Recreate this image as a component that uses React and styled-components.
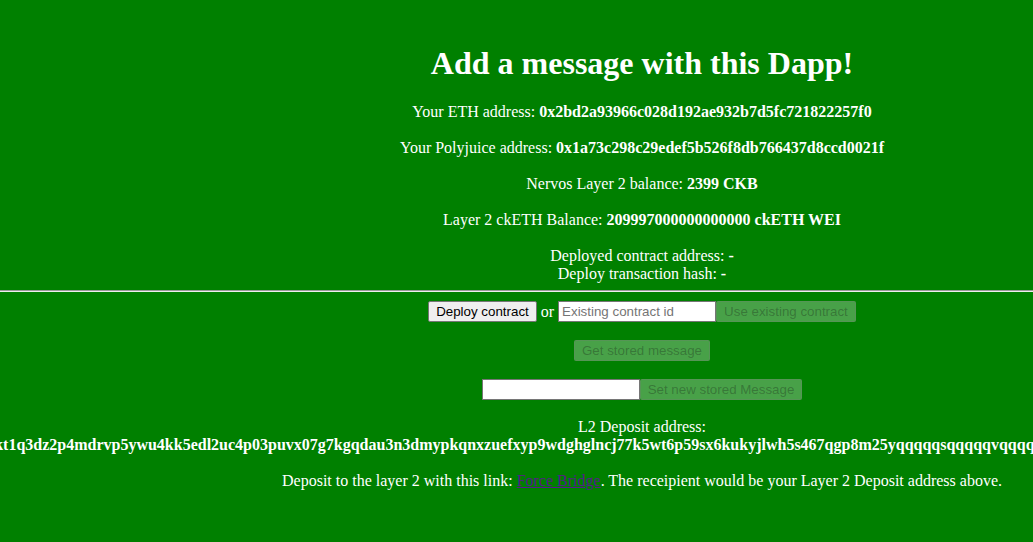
import React from "react";
import styled, { createGlobalStyle } from "styled-components";

const GlobalStyle = createGlobalStyle`
  html, body {
    margin: 0;
    padding: 0;
    background: #008000;
    overflow: hidden;
  }
  body {
    font-family: "Liberation Serif", "Times New Roman", serif;
    font-size: 16px;
    color: #ffffff;
  }
`;

const Page = styled.div`
  width: 1284px;
  padding-top: 23.5px;
  display: flex;
  flex-direction: column;
  align-items: center;
  text-align: center;
  line-height: 18px;
`;

const Title = styled.h1`
  margin: 21.44px 0;
  font-size: 32px;
  line-height: 36.8px;
  font-weight: bold;
`;

const Stack = styled.div`
  display: flex;
  flex-direction: column;
  align-items: center;
  gap: ${(p) => p.$gap ?? 18}px;
`;

const Line = styled.div`
  white-space: nowrap;
`;

const Divider = styled.hr`
  align-self: stretch;
  margin: 7px 0 9px;
  border: 0;
  border-top: 1px solid #9a9a9a;
  border-bottom: 1px solid #eeeeee;
  height: 0;
`;

const Row = styled.div`
  display: flex;
  align-items: center;
  height: 21px;
`;

const Or = styled.span`
  margin: 0 4px;
  font-size: 16px;
`;

const Button = styled.button`
  box-sizing: border-box;
  height: 21px;
  padding: 1px 7px;
  font-family: "Liberation Sans", Arial, sans-serif;
  font-size: 13.333px;
  line-height: 15px;
  background: #efefef;
  color: #000000;
  border: 1px solid #767676;
  border-radius: 2px;
  margin: 0;

  &:disabled {
    background: rgba(239, 239, 239, 0.3);
    color: rgba(16, 16, 16, 0.3);
    border-color: rgba(118, 118, 118, 0.3);
  }
`;

const Input = styled.input`
  box-sizing: border-box;
  width: ${(p) => p.$w ?? 158}px;
  height: 21px;
  padding: 1px 3px;
  margin: 0;
  font-family: "Liberation Sans", Arial, sans-serif;
  font-size: 13.333px;
  background: #ffffff;
  border: 1px solid #767676;
  border-radius: 0;
  color: #000;

  &::placeholder {
    color: #757575;
  }
`;

const Address = styled.div`
  display: flex;
  justify-content: center;
  white-space: nowrap;
  font-weight: bold;
`;

const Link = styled.a`
  color: #551a8b;
  text-decoration: underline;
`;

const DEPOSIT_ADDRESS =
  "ckt1q3dz2p4mdrvp5ywu4kk5edl2uc4p03puvx07g7kgqdau3n3dmypkqnxzuefxyp9wdghglncj77k5wt6p59sx6kukyjlwh5s467qgp8m25yqqqqqsqqqqqvqqqqqfjqqqqp7uhp2wdqqqqz9ndtnh6qqpq";

export default function App() {
  return (
    <>
      <GlobalStyle />
      <Page>
        <Title>Add a message with this Dapp!</Title>
        <Stack>
          <Line>
            Your ETH address: <b>0x2bd2a93966c028d192ae932b7d5fc721822257f0</b>
          </Line>
          <Line>
            Your Polyjuice address: <b>0x1a73c298c29edef5b526f8db766437d8ccd0021f</b>
          </Line>
          <Line>
            Nervos Layer 2 balance: <b>2399 CKB</b>
          </Line>
          <Line>
            Layer 2 ckETH Balance: <b>209997000000000000 ckETH WEI</b>
          </Line>
          <Stack $gap={0}>
            <Line>
              Deployed contract address: <b>-</b>
            </Line>
            <Line>
              Deploy transaction hash: <b>-</b>
            </Line>
          </Stack>
        </Stack>
        <Divider />
        <Stack>
          <Row>
            <Button>Deploy contract</Button>
            <Or>or</Or>
            <Input placeholder="Existing contract id" />
            <Button disabled>Use existing contract</Button>
          </Row>
          <Row>
            <Button disabled>Get stored message</Button>
          </Row>
          <Row>
            <Input $w={158} />
            <Button disabled>Set new stored Message</Button>
          </Row>
          <Stack $gap={0}>
            <Line>L2 Deposit address:</Line>
            <Address>{DEPOSIT_ADDRESS}</Address>
          </Stack>
          <Line>
            Deposit to the layer 2 with this link:{" "}
            <Link href="#">Force Bridge</Link>. The receipient would be your Layer 2 Deposit
            address above.
          </Line>
        </Stack>
      </Page>
    </>
  );
}
